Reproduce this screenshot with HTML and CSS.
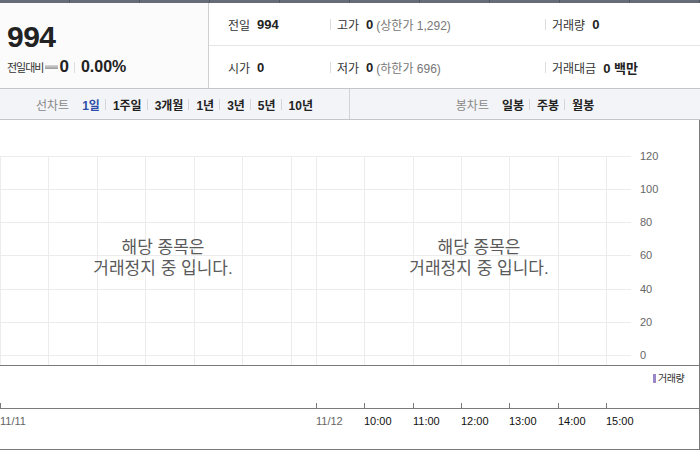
FILE: index.html
```html
<!doctype html>
<html>
	<head>
		<title>시세</title>
		<meta charset="utf-8">
		<link rel="stylesheet" href="styles.css">
	</head>
	<body>
		<div class="topbar"></div>
		<div class="summary">
			<div class="price">
				<div class="now">994</div>
				<div class="change">
					<span class="lbl">전일대비</span>
					<span class="flat"></span>
					<b>0</b>
					<span class="bar"></span>
					<b>0.00%</b>
				</div>
			</div>
			<div class="info">
				<div class="cell top first"><span>전일</span><b>994</b></div>
				<div class="cell top"><span>고가</span><b>0</b><em>(상한가 1,292)</em></div>
				<div class="cell top"><span>거래량</span><b>0</b></div>
				<div class="cell first"><span>시가</span><b>0</b></div>
				<div class="cell"><span>저가</span><b>0</b><em>(하한가 696)</em></div>
				<div class="cell"><span>거래대금</span><b>0 백만</b></div>
			</div>
		</div>
		<div class="tabs">
			<div class="tabgroup line">
				<span class="title">선차트</span>
				<a href="#1d" class="tab on">1일</a>
				<a href="#1w" class="tab">1주일</a>
				<a href="#3m" class="tab">3개월</a>
				<a href="#1y" class="tab">1년</a>
				<a href="#3y" class="tab">3년</a>
				<a href="#5y" class="tab">5년</a>
				<a href="#10y" class="tab">10년</a>
			</div>
			<div class="tabgroup">
				<span class="title">봉차트</span>
				<a href="#day" class="tab">일봉</a>
				<a href="#week" class="tab">주봉</a>
				<a href="#month" class="tab">월봉</a>
			</div>
		</div>
		<div class="chart">
			<svg class="plot" width="700" height="330" viewBox="0 0 700 330">
				<path class="grid" d="M0 36.5H631M0 69.5H631M0 102.5H631M0 135.5H631M0 169.5H631M0 202.5H631M0 235.5H631
					M0.5 36V245M48.5 36V245M97.5 36V245M145.5 36V245M194.5 36V245M242.5 36V245M291.5 36V245M316.5 36V245
					M364.5 36V245M413.5 36V245M461.5 36V245M509.5 36V245M558.5 36V245M606.5 36V245"/>
				<path class="axis" d="M0 245.5H699M0 288.5H699M0 329.5H699M699.5 0V330
					M0.5 283V288M316.5 283V288M364.5 283V288M413.5 283V288M461.5 283V288M509.5 283V288M558.5 283V288M606.5 283V288"/>
				<g class="ylabels">
					<text x="640" y="40">120</text>
					<text x="640" y="73">100</text>
					<text x="640" y="106">80</text>
					<text x="640" y="139">60</text>
					<text x="640" y="173">40</text>
					<text x="640" y="206">20</text>
					<text x="640" y="239">0</text>
				</g>
				<rect class="legend-mark" x="653" y="254" width="3" height="9"/>
				<text class="legend" x="658" y="262">거래량</text>
				<g class="xlabels">
					<text class="date" x="0" y="305">11/11</text>
					<text class="date" x="316" y="305">11/12</text>
					<text x="364" y="305">10:00</text>
					<text x="413" y="305">11:00</text>
					<text x="461" y="305">12:00</text>
					<text x="509" y="305">13:00</text>
					<text x="558" y="305">14:00</text>
					<text x="606" y="305">15:00</text>
				</g>
				<g class="notice">
					<text x="163" y="133">해당 종목은</text>
					<text x="163" y="154">거래정지 중 입니다.</text>
					<text x="479" y="133">해당 종목은</text>
					<text x="479" y="154">거래정지 중 입니다.</text>
				</g>
			</svg>
		</div>
	</body>
</html>
```

FILE: styles.css
```css
* {
	margin: 0;
	padding: 0;
	box-sizing: border-box;
}
html,body {
	background-color: #fff;
	font-family: "Liberation Sans", "Noto Sans CJK KR", sans-serif;
	color: #333;
}
a {
	text-decoration: none;
}
b, em {
	font-style: normal;
}
.topbar {
	height: 3px;
	background: repeating-linear-gradient(90deg, #666d79 0, #666d79 69px, #50565f 69px, #50565f 70px);
}
.summary {
	display: flex;
	height: 86px;
	border-bottom: 1px solid #c4c6ca;
}
.price {
	width: 209px;
	border-right: 1px solid #cfd0d3;
	background-color: #fbfbfb;
	padding: 17px 0 0 7px;
}
.now {
	font-size: 30px;
	font-weight: bold;
	color: #222;
	line-height: 34px;
	letter-spacing: -0.5px;
}
.change {
	display: flex;
	align-items: center;
	margin-top: 3px;
	color: #222;
}
.change .lbl {
	font-size: 11px;
	letter-spacing: -1px;
	color: #333;
}
.change .flat {
	width: 13px;
	height: 4px;
	margin: 0 1px 0 2px;
	background: linear-gradient(#d8d8d8, #9a9a9a);
}
.change b {
	font-size: 17px;
}
.change .bar {
	width: 1px;
	height: 11px;
	background-color: #ddd;
	margin: 0 6px 0 5px;
}
.change b:last-child {
	font-size: 16px;
}
.info {
	flex-grow: 1;
	display: grid;
	grid-template-columns: 121px 215px 1fr;
	grid-template-rows: 43px 42px;
}
.cell {
	display: flex;
	align-items: center;
	font-size: 12px;
	color: #333;
}
.cell.top {
	border-bottom: 1px solid #e6e6e6;
}
.cell::before {
	content: "";
	width: 1px;
	height: 11px;
	background-color: #dcdcdc;
	margin-right: 6px;
}
.cell.first {
	padding-left: 19px;
}
.cell.first::before {
	display: none;
}
.cell b {
	font-size: 13px;
	margin-left: 7px;
	color: #222;
}
.cell em {
	font-size: 12px;
	color: #777;
	margin-left: 3px;
}
.tabs {
	display: flex;
	height: 31px;
	background-color: #f3f4f7;
	border-bottom: 1px solid #c4c6ca;
}
.tabgroup {
	flex-grow: 1;
	display: flex;
	align-items: center;
	justify-content: center;
	font-size: 12px;
}
.tabgroup.line {
	flex-grow: 0;
	width: 350px;
	border-right: 1px solid #d2d4d8;
}
.tabgroup .title {
	color: #888;
	margin-right: 13px;
}
.tab {
	display: flex;
	align-items: center;
	font-weight: bold;
	color: #222;
}
.tab::before {
	content: "";
	width: 1px;
	height: 11px;
	background-color: #d6d6d6;
	margin: 0 7px 0 5px;
}
.tabgroup .title + .tab::before {
	display: none;
}
.tab.on {
	color: #2d4ea8;
}
.plot {
	display: block;
}
.grid {
	fill: none;
	stroke: #ececec;
	stroke-width: 1;
}
.axis {
	fill: none;
	stroke: #7a7a7a;
	stroke-width: 1;
}
.ylabels text {
	font-size: 11px;
	fill: #666;
}
.legend-mark {
	fill: #9a87c7;
}
.legend {
	font-size: 10px;
	fill: #333;
	letter-spacing: -0.5px;
}
.xlabels text {
	font-size: 11px;
	fill: #111;
}
.xlabels .date {
	fill: #666;
}
.notice text {
	font-size: 17px;
	fill: #5a5a5a;
	text-anchor: middle;
}
```
